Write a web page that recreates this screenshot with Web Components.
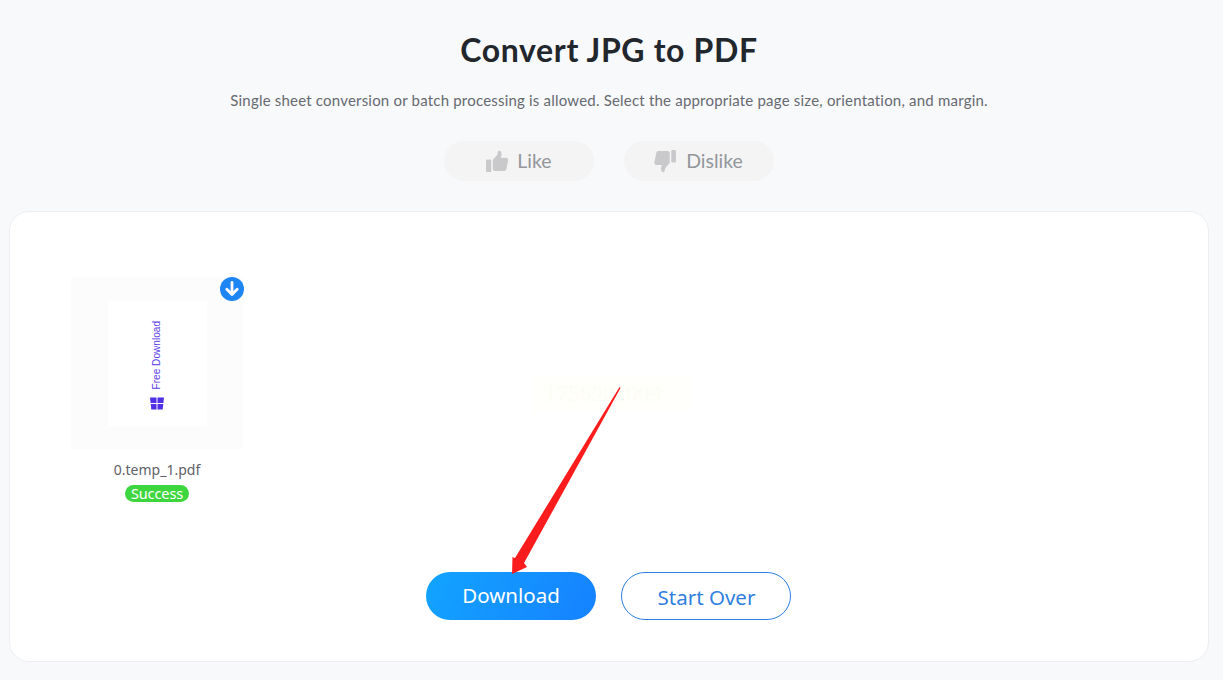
<!DOCTYPE html>
<html lang="en">
<head>
<meta charset="utf-8">
<title>Convert JPG to PDF</title>
<style>
html,body{margin:0;padding:0;height:680px;overflow:hidden;background:#f8f9fb;}
body{font-family:"Lato","Noto Sans",sans-serif;}
</style>
</head>
<body>
<convert-page>
  <page-header heading="Convert JPG to PDF" sub="Single sheet conversion or batch processing is allowed. Select the appropriate page size, orientation, and margin."></page-header>
  <vote-bar></vote-bar>
  <result-card>
    <file-tile name="0.temp_1.pdf" status="Success"></file-tile>
    <action-bar slot="actions"></action-bar>
  </result-card>
</convert-page>
<script>
function def(name, html, init){
  customElements.define(name, class extends HTMLElement{
    connectedCallback(){
      if(this.shadowRoot) return;
      const r=this.attachShadow({mode:'open'});
      r.innerHTML=html;
      if(init) init(this,r);
    }
  });
}
def('convert-page',`<style>
:host{display:flex;flex-direction:column;width:1200px;margin-left:9px;height:680px;box-sizing:border-box;}
</style><slot></slot>`);

def('page-header',`<style>
:host{display:flex;flex-direction:column;align-items:center;padding-top:30px;}
h1{margin:0;font:700 32px/40px "Lato",sans-serif;color:#22262d;letter-spacing:.65px;}
p{margin:20px 0 0;font:400 15px/20px "Lato",sans-serif;color:#666a70;letter-spacing:.2px;}
</style><h1></h1><p></p>`,(h,r)=>{
  r.querySelector('h1').textContent=h.getAttribute('heading');
  r.querySelector('p').textContent=h.getAttribute('sub');
});

def('vote-bar',`<style>
:host{display:flex;justify-content:center;gap:30px;margin-top:31px;}
.b{display:flex;align-items:center;justify-content:center;gap:8px;width:150px;height:40px;border-radius:20px;background:#f4f4f5;color:#93969b;font:400 19.5px/39px "Lato",sans-serif;box-sizing:border-box;padding-right:2px;}
.b span{margin-top:-1px;}
svg{display:block;width:25px;height:25px;fill:#c9c9cb;}
.l svg{margin-left:1px;margin-right:-1px;}
.d svg{margin-left:-1px;margin-right:1px;}
</style>
<div class="b l"><svg viewBox="0 0 24 24"><rect x="1" y="10" width="5" height="12" rx="1"/><path d="M7.5 10.2 11.4 6c.6-.8.8-1.8.9-3 .1-1 .8-1.6 1.7-1.4 1.3.3 1.9 1.6 1.9 3 0 1.4-.4 2.6-.9 3.9h5.300c1.300 0 2.100 1 1.900 2.300l-1.600 8.200c-.2 1.200-1 2-2.200 2H9.500c-1.200 0-2-.8-2-2z"/></svg><span>Like</span></div>
<div class="b d"><svg viewBox="0 0 24 24"><rect x="18.500" y="1" width="4.500" height="12" rx="1"/><path d="M17 13.500l-3.900 4.300c-.6.8-.8 1.800-.9 3-.1 1-.8 1.600-1.700 1.400-1.300-.3-1.900-1.600-1.900-3 0-1.400.4-2.600.9-3.900H4.200c-1.300 0-2.100-1-1.900-2.300l1.600-8.200C4.100 3.200 4.900 2 6.100 2H15c1.200 0 2 .8 2 2z"/></svg><span>Dislike</span></div>`);

def('result-card',`<style>
:host{display:block;position:relative;margin-top:30px;height:451px;box-sizing:border-box;background:#fff;border:1px solid #eceef1;border-radius:20px;padding:65px 61px 41px;}
.wrap{display:flex;flex-direction:column;justify-content:space-between;height:100%;}
.stamp{position:absolute;left:522px;top:163px;width:158px;height:38px;box-sizing:border-box;padding-left:13px;background:#fffffb;color:#fdfdf6;font:400 23px/38px "Liberation Serif",serif;letter-spacing:.1px;border-radius:4px;}
svg.arrow{position:absolute;left:490px;top:166px;width:130px;height:205px;overflow:visible;}
</style>
<div class="wrap"><slot></slot><slot name="actions"></slot></div>
<div class="stamp">1756901009</div>
<svg class="arrow" viewBox="0 0 130 205"><path fill="#fb1d1d" d="M119.500 9 120.500 10 24 185 27 189 12 196 12.500 179 15 180z"/></svg>`);

def('file-tile',`<style>
:host{display:flex;flex-direction:column;align-items:center;width:172px;}
.thumb{position:relative;display:flex;justify-content:center;align-items:center;width:172px;height:172px;background:#fcfcfc;}
.sheet{display:flex;flex-direction:column;align-items:center;justify-content:flex-end;width:99px;height:125px;margin:1px 0 0 1px;background:#fff;box-sizing:border-box;padding:0 1px 15px 0;gap:7px;}
.v{writing-mode:vertical-rl;transform:rotate(180deg);font:400 10px/12px "Liberation Sans",sans-serif;letter-spacing:.05px;color:#5a3be6;}
.sheet svg{display:block;width:14px;height:15px;fill:#4f2fe8;}
.dl{position:absolute;right:-1px;top:0;width:24px;height:24px;}
.n{margin-top:11px;font:400 14px/20px "Noto Sans","Open Sans",sans-serif;color:#5f6166;}
.s{margin-top:5px;padding:0 6px;height:17px;border-radius:9px;background:#3ed63e;color:#fff;font:400 14.5px/17px "Noto Sans","Open Sans",sans-serif;letter-spacing:-.1px;}
</style>
<div class="thumb"><div class="sheet"><span class="v">Free Download</span><svg viewBox="0 0 14 14"><path d="M0 1h6.500v5.500H.6zM7.500 1H14l-.6 5.500H7.500zM.7 7.500h5.800V13H1.300zM7.500 7.500h5.800L12.700 13H7.500z"/></svg></div>
<svg class="dl" viewBox="0 0 24 24"><circle cx="12" cy="12" r="12" fill="#1e85f5"/><path d="M12 5.500v12M6.800 12.300 12 17.500l5.200-5.200" fill="none" stroke="#fff" stroke-width="2.800" stroke-linecap="round" stroke-linejoin="round"/></svg></div>
<div class="n"></div><div class="s"></div>`,(h,r)=>{
  r.querySelector('.n').textContent=h.getAttribute('name');
  r.querySelector('.s').textContent=h.getAttribute('status');
});

def('action-bar',`<style>
:host{display:flex;justify-content:center;gap:25px;margin-left:-2px;}
.a{display:block;width:170px;height:48px;border-radius:24px;box-sizing:border-box;text-align:center;font:400 20.5px/48px "Noto Sans","Open Sans",sans-serif;}
.p{background:linear-gradient(115deg,#12a4ff,#1681ff);color:#fff;padding-left:1px;line-height:47px;}
.o{background:#fff;border:1px solid #2f7fe0;color:#2f7fe0;line-height:48px;padding-left:2px;}
</style><div class="a p">Download</div><div class="a o">Start Over</div>`);
</script>
</body>
</html>
